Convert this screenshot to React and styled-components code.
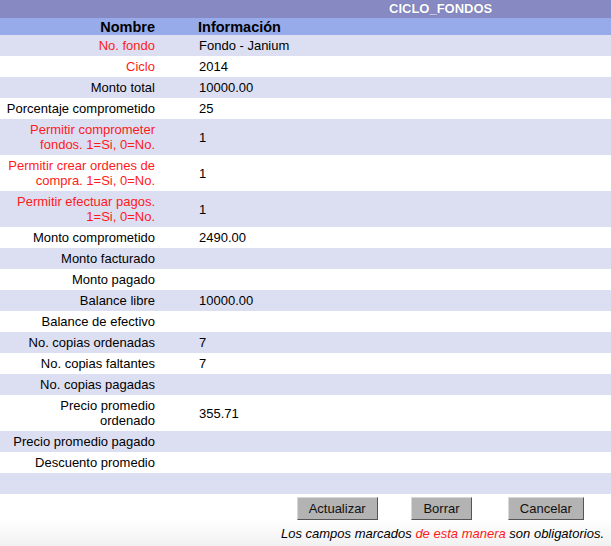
import styled, { createGlobalStyle } from 'styled-components'

const GlobalStyle = createGlobalStyle`
  html, body {
    margin: 0;
    padding: 0;
    background: #ffffff;
  }
  body {
    font-family: "Liberation Sans", Arial, Helvetica, sans-serif;
    font-size: 13px;
    color: #000;
  }
`

const Page = styled.div`
  width: 611px;
  height: 546px;
  display: flex;
  flex-direction: column;
  background: linear-gradient(to bottom, #ffffff 0, #ffffff 520px, #f1f1f1 546px);
`

const TitleBar = styled.div`
  height: 18px;
  background: #8689c2;
  color: #ffffff;
  font-weight: bold;
  font-size: 13px;
  line-height: 18px;
  padding-left: 389px;
  text-shadow: 0 0 1px rgba(80, 80, 140, 0.6);
`

const HeadRow = styled.div`
  display: grid;
  grid-template-columns: 155px 1fr;
  height: 17px;
  background: #97abea;
  font-weight: bold;
  font-size: 14.5px;
  line-height: 18px;
`

const HeadLabel = styled.div`
  text-align: right;
`

const HeadValue = styled.div`
  padding-left: 43px;
`

const Row = styled.div`
  display: grid;
  grid-template-columns: 155px 1fr;
  align-items: center;
  min-height: 21px;
  background: ${({ $alt }) => ($alt ? '#dcdff2' : '#ffffff')};
`

const Label = styled.div`
  text-align: right;
  padding: 3px 0 3px 4px;
  line-height: 15px;
  color: ${({ $required }) => ($required ? '#ff1a1a' : '#000')};
`

const Value = styled.div`
  padding: 3px 0 3px 44px;
  line-height: 15px;
`

const Buttons = styled.div`
  display: flex;
  margin: 3px 0 0 285px;
  width: 313px;
`

const ButtonCell = styled.div`
  flex: 1;
  display: flex;
  justify-content: center;
`

const Button = styled.button`
  font-family: "Liberation Sans", Arial, Helvetica, sans-serif;
  font-size: 13px;
  color: #111;
  background: #b3b3b3;
  height: 23px;
  padding: 0 11px;
  border: 1px solid;
  border-color: #d8d8d8 #555555 #555555 #d8d8d8;
  cursor: pointer;
`

const Note = styled.div`
  text-align: right;
  padding-right: 7px;
  margin-top: 6px;
  font-style: italic;
  font-size: 13px;
`

const Red = styled.span`
  color: #ff1a1a;
`

const rows = [
  { label: 'No. fondo', value: 'Fondo - Janium', required: true },
  { label: 'Ciclo', value: '2014', required: true },
  { label: 'Monto total', value: '10000.00' },
  { label: 'Porcentaje comprometido', value: '25' },
  { label: 'Permitir comprometer fondos. 1=Si, 0=No.', value: '1', required: true },
  { label: 'Permitir crear ordenes de compra. 1=Si, 0=No.', value: '1', required: true },
  { label: 'Permitir efectuar pagos. 1=Si, 0=No.', value: '1', required: true },
  { label: 'Monto comprometido', value: '2490.00' },
  { label: 'Monto facturado', value: '' },
  { label: 'Monto pagado', value: '' },
  { label: 'Balance libre', value: '10000.00' },
  { label: 'Balance de efectivo', value: '' },
  { label: 'No. copias ordenadas', value: '7' },
  { label: 'No. copias faltantes', value: '7' },
  { label: 'No. copias pagadas', value: '' },
  { label: 'Precio promedio ordenado', value: '355.71' },
  { label: 'Precio promedio pagado', value: '' },
  { label: 'Descuento promedio', value: '' },
  { label: '', value: '' },
]

export default function App() {
  return (
    <>
      <GlobalStyle />
      <Page>
        <TitleBar>CICLO_FONDOS</TitleBar>
        <HeadRow>
          <HeadLabel>Nombre</HeadLabel>
          <HeadValue>Información</HeadValue>
        </HeadRow>
        {rows.map((r, i) => (
          <Row key={i} $alt={i % 2 === 0}>
            <Label $required={r.required}>{r.label}</Label>
            <Value>{r.value}</Value>
          </Row>
        ))}
        <Buttons>
          <ButtonCell>
            <Button>Actualizar</Button>
          </ButtonCell>
          <ButtonCell>
            <Button>Borrar</Button>
          </ButtonCell>
          <ButtonCell>
            <Button>Cancelar</Button>
          </ButtonCell>
        </Buttons>
        <Note>
          Los campos marcados <Red>de esta manera</Red> son obligatorios.
        </Note>
      </Page>
    </>
  )
}
